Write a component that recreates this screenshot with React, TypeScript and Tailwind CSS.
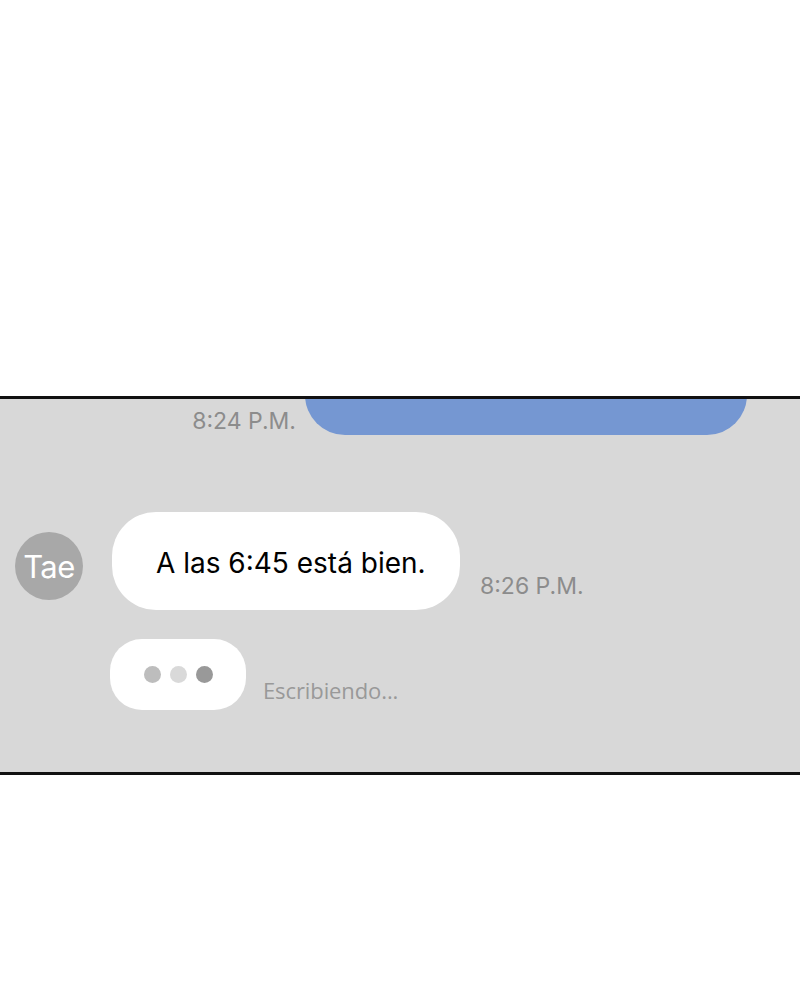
import React from 'react';

const sans = "font-['Inter','Roboto','Liberation_Sans',sans-serif]";

function Avatar({ name }: { name: string }) {
  return (
    <div className="w-[68px] h-[68px] shrink-0 rounded-full bg-[#a8a8a8] flex items-center justify-center mt-[10px]">
      <span className={`${sans} text-white text-[31px] leading-none tracking-[-0.5px]`}>{name}</span>
    </div>
  );
}

function TypingDots() {
  return (
    <div className="w-[136px] h-[71px] rounded-[32px] bg-white flex items-center pl-[34px] gap-[9px]">
      <span className="w-[17px] h-[17px] rounded-full bg-[#bdbdbd]" />
      <span className="w-[17px] h-[17px] rounded-full bg-[#d9d9d9]" />
      <span className="w-[17px] h-[17px] rounded-full bg-[#999999]" />
    </div>
  );
}

export default function App() {
  return (
    <div className="w-[800px] h-[1000px] bg-white">
      <div className="h-[396px]" />
      <div className="border-y-[3px] border-[#111111] bg-[#d8d8d8] overflow-hidden pb-[62px]">
        {/* previous outgoing message, cut off at the top */}
        <div className="flex items-end justify-end pr-[53px]">
          <span className={`${sans} text-[23px] leading-none text-[#8c8c8c] mb-[2px] mr-[9px]`}>8:24 P.M.</span>
          <div className="-mt-[44px] w-[442px] h-[80px] rounded-[40px] bg-[#7597d2]" />
        </div>

        {/* incoming message */}
        <div className="flex items-center pl-[15px] mt-[77px]">
          <Avatar name="Tae" />
          <div className="ml-[29px] w-[348px] h-[98px] rounded-[44px] bg-white flex items-center pl-[44px] pt-[4px]">
            <span className={`${sans} text-[28px] leading-none text-black`}>A las 6:45 está bien.</span>
          </div>
          <span className={`${sans} self-end mb-[12px] ml-[20px] text-[23px] leading-none text-[#8c8c8c]`}>8:26 P.M.</span>
        </div>

        {/* typing indicator */}
        <div className="flex items-end pl-[110px] mt-[29px]">
          <TypingDots />
          <span className="ml-[17px] mb-[9px] font-['Open_Sans',sans-serif] text-[22px] leading-none tracking-[-0.1px] text-[#999999]">
            Escribiendo...
          </span>
        </div>
      </div>
    </div>
  );
}
